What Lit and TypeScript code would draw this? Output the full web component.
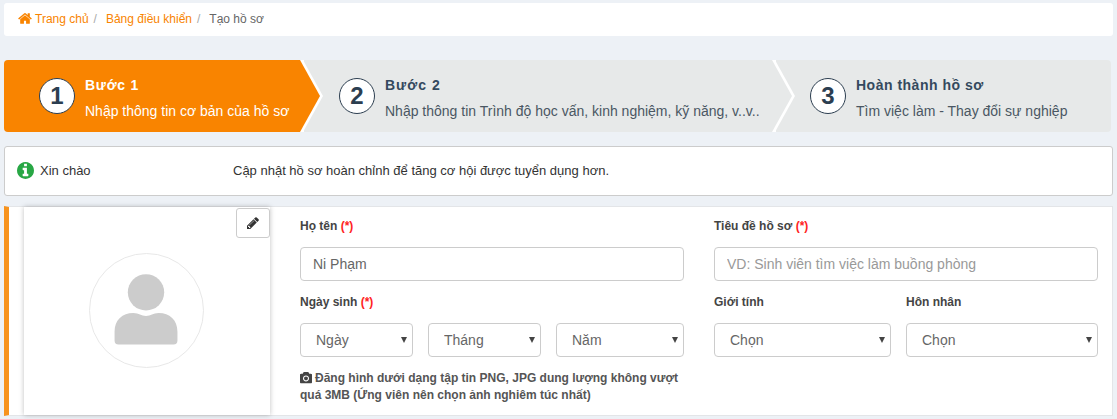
import { LitElement, html, css, svg } from "lit";
import { customElement } from "lit/decorators.js";

const HOME = "M1408 992v480q0 26-19 45t-45 19h-384v-384h-256v384h-384q-26 0-45-19t-19-45v-480q0-1 .5-3t.5-3l575-474 575 474q1 2 1 6zm223-69l-62 74q-8 9-21 11h-3q-13 0-21-7l-692-577-692 577q-12 8-24 7-13-2-21-11l-62-74q-8-10-7-23.500t11-21.500l719-599q32-26 76-26t76 26l244 204v-195q0-14 9-23t23-9h192q14 0 23 9t9 23v408l219 182q10 8 11 21.500t-7 23.500z";
const PENCIL = "M491 1536l91-91-235-235-91 91v107h128v128h107zm523-928q0-22-22-22-10 0-17 7l-542 542q-7 7-7 17 0 22 22 22 10 0 17-7l542-542q7-7 7-17zm-54-192l416 416-832 832h-416v-416zm683 96q0 53-37 90l-166 166-416-416 166-165q36-38 90-38 53 0 91 38l235 234q37 39 37 91z";
const CAMERA = "M896 672q119 0 203.500 84.500t84.500 203.500-84.500 203.500-203.500 84.500-203.500-84.500-84.500-203.500 84.500-203.500 203.500-84.500zm704-416q106 0 181 75t75 181v896q0 106-75 181t-181 75h-1408q-106 0-181-75t-75-181v-896q0-106 75-181t181-75h224l51-136q19-49 69.500-84.500t103.500-35.500h512q53 0 103.500 35.500t69.500 84.500l51 136h224zm-704 1152q185 0 316.500-131.500t131.500-316.500-131.500-316.500-316.500-131.500-316.500 131.500-131.500 316.500 131.500 316.500 316.500 131.500z";
const INFO = "M1152 1376v-160q0-14-9-23t-23-9h-96v-512q0-14-9-23t-23-9h-320q-14 0-23 9t-9 23v160q0 14 9 23t23 9h96v320h-96q-14 0-23 9t-9 23v160q0 14 9 23t23 9h448q14 0 23-9t9-23zm-128-896v-160q0-14-9-23t-23-9h-192q-14 0-23 9t-9 23v160q0 14 9 23t23 9h192q14 0 23-9t9-23zm640 416q0 209-103 385.500t-279.500 279.500-385.500 103-385.500-103-279.500-279.500-103-385.500 103-385.500 279.500-279.500 385.500-103 385.500 103 279.500 279.500 103 385.500z";

const icon = (d: string, cls: string, vb = "0 0 1792 1792") =>
  html`<svg class=${cls} viewBox=${vb} aria-hidden="true">${svg`<path d=${d} fill="currentColor"></path>`}</svg>`;

@customElement("app-root")
export class AppRoot extends LitElement {
  static styles = css`
    :host {
      display: block;
      width: 1117px;
      height: 419px;
      overflow: hidden;
      background: #edf1f6;
      font-family: "Liberation Sans", Arial, sans-serif;
      font-size: 12px;
      color: #333;
      box-sizing: border-box;
      padding: 3px 4px 0;
    }
    * { box-sizing: border-box; }
    .crumbs {
      height: 33px;
      background: #fff;
      border-radius: 3px;
      display: flex;
      align-items: center;
      padding: 0 14px 2px 14px;
      font-size: 12px;
      color: #666;
    }
    .crumbs a { color: #f98400; text-decoration: none; display: flex; align-items: center; gap: 3px; }
    .crumbs .sep { color: #aaa; padding: 0 9px 0 5px; }
    .home { width: 14px; height: 15px; }

    .steps {
      margin: 24px 2px 0 0;
      height: 72px;
      display: flex;
      background: #e7e9e9;
      border-radius: 4px;
    }
    .step {
      position: relative;
      display: flex;
      align-items: center;
      gap: 10px;
      color: #4a5763;
    }
    .step:nth-child(1) { width: 296px; padding-left: 35px; background: #f98400; color: #fff; border-radius: 4px 0 0 4px; }
    .step:nth-child(2) { width: 472px; padding-left: 39px; }
    .step:nth-child(3) { flex: 1; padding-left: 38px; }
    .step .outer, .step .inner {
      position: absolute;
      top: 0;
      height: 72px;
      clip-path: polygon(0 0, 100% 50%, 0 100%);
    }
    .step .outer { left: calc(100% + 4px); width: 20px; background: #fff; z-index: 1; margin-left: -1px; }
    .step .inner { left: 100%; width: 20px; z-index: 2; }
    .step .outer.back { left: 100%; width: 4px; clip-path: none; margin-left: 0; }
    .step:nth-child(1) .inner { background: #f98400; }
    .step:nth-child(2) .inner { background: #e7e9e9; }
    .num {
      width: 36px;
      height: 36px;
      flex: none;
      border-radius: 50%;
      background: #fff;
      border: 1px solid #2c3e50;
      color: #2c3e50;
      font-size: 24px;
      font-weight: 700;
      display: flex;
      align-items: center;
      justify-content: center;
    }
    .st-text { padding-top: 4px; }
    .st-title { font-size: 14px; font-weight: 700; line-height: 20px; letter-spacing: .5px; color: #34495e; }
    .step:nth-child(1) .st-title { color: #fff; letter-spacing: .7px; }
    .step:nth-child(2) .st-title { letter-spacing: 1px; }
    .st-sub { font-size: 14px; line-height: 20px; margin-top: 6px; white-space: nowrap; }

    .alert {
      margin-top: 14px;
      height: 50px;
      background: #fff;
      border: 1px solid #ccc;
      border-radius: 3px;
      display: flex;
      align-items: center;
      padding: 0 12px 1px 12px;
      color: #333;
      font-size: 13px;
    }
    .info { width: 17px; height: 17px; color: #28a745; flex: none; }
    .hello { margin-left: 6px; width: 193px; }

    .panel {
      margin-top: 10px;
      height: 210px;
      background: #fff;
      border: 1px solid #e3e5e8;
      border-left: 5px solid #f7931e;
      display: flex;
      padding-left: 15px;
    }
    .photo {
      width: 246px;
      flex: none;
      height: 208px;
      position: relative;
      box-shadow: 0 0 5px rgba(0, 0, 0, .25);
      display: flex;
      align-items: center;
      justify-content: center;
      background: #fff;
    }
    .edit {
      position: absolute;
      top: 1px;
      right: 0;
      width: 34px;
      height: 30px;
      background: #fff;
      border: 1px solid #ccc;
      border-radius: 3px;
      color: #333;
      display: flex;
      align-items: center;
      justify-content: center;
      padding: 0;
    }
    .pencil { width: 14px; height: 14px; }
    .avatar {
      width: 115px;
      height: 115px;
      border-radius: 50%;
      border: 1px solid #e8e8e8;
      margin: -2px 0 0 -2px;
    }
    .avatar svg { display: block; width: 100%; height: 100%; }
    .form {
      margin-left: 30px;
      width: 798px;
      display: grid;
      grid-template-columns: 384px 384px;
      column-gap: 30px;
      align-content: start;
      padding-top: 11px;
    }
    .field { display: flex; flex-direction: column; min-width: 0; }
    label { font-weight: 700; font-size: 12px; line-height: 17px; height: 17px; color: #444; margin-bottom: 12px; white-space: nowrap; }
    label b { color: #f22; font-weight: 700; }
    input, select {
      font-family: inherit;
      font-size: 14px;
      height: 34px;
      width: 100%;
      border: 1px solid #ccc;
      border-radius: 4px;
      background: #fff;
      color: #666;
      outline: none;
    }
    input { padding: 0 12px; }
    input::placeholder { color: #999; opacity: 1; }
    select { appearance: none; -webkit-appearance: none; padding: 0 20px 0 15px; }
    .sel { position: relative; display: block; flex: none; }
    .sel::after {
      content: "";
      position: absolute;
      top: 14px;
      right: 6px;
      border-left: 3.5px solid transparent;
      border-right: 3.5px solid transparent;
      border-top: 6px solid #444;
      pointer-events: none;
    }
    .row2 { margin-top: 13px; }
    .dates { display: flex; gap: 15px; }
    .dates .sel { width: 113px; }
    .dates .sel:last-child { width: 128px; }
    .pair { display: grid; grid-template-columns: 177px 192px; column-gap: 15px; }
    .note {
      margin-top: 13px;
      font-weight: 700;
      font-size: 12px;
      line-height: 17px;
      color: #555;
    }
    .cam { width: 12px; height: 12px; vertical-align: -2px; margin-right: 3px; color: #444; }
  `;

  private sel(label: string) {
    return html`<span class="sel"><select><option>${label}</option></select></span>`;
  }

  render() {
    return html`
      <nav class="crumbs">
        <a href="#">${icon(HOME, "home", "0 0 1664 1792")}Trang chủ</a><span class="sep">/</span>
        <a href="#">Bảng điều khiển</a><span class="sep">/</span>
        <span>Tạo hồ sơ</span>
      </nav>

      <section class="steps">
        <div class="step">
          <span class="num">1</span>
          <div class="st-text"><div class="st-title">Bước 1</div><div class="st-sub">Nhập thông tin cơ bản của hồ sơ</div></div>
          <i class="outer back"></i><i class="outer"></i><i class="inner"></i>
        </div>
        <div class="step">
          <span class="num">2</span>
          <div class="st-text"><div class="st-title">Bước 2</div><div class="st-sub">Nhập thông tin Trình độ học vấn, kinh nghiệm, kỹ năng, v..v..</div></div>
          <i class="outer back"></i><i class="outer"></i><i class="inner"></i>
        </div>
        <div class="step">
          <span class="num">3</span>
          <div class="st-text"><div class="st-title">Hoàn thành hồ sơ</div><div class="st-sub">Tìm việc làm - Thay đổi sự nghiệp</div></div>
        </div>
      </section>

      <section class="alert">
        ${icon(INFO, "info", "128 128 1536 1536")}
        <span class="hello">Xin chào</span>
        <span>Cập nhật hồ sơ hoàn chỉnh để tăng cơ hội được tuyển dụng hơn.</span>
      </section>

      <section class="panel">
        <div class="photo">
          <button class="edit">${icon(PENCIL, "pencil")}</button>
          <div class="avatar">
            <svg viewBox="0 0 115 115" aria-hidden="true">
              <circle cx="57" cy="39" r="18.500" fill="#ccc"></circle>
              <path d="M25 92 V79 C25 67 33 60 44 60 C50 60 52 63 57 63 C62 63 64 60 70 60 C81 60 89 67 89 79 V88 Q89 92 85 92 H29 Q25 92 25 88 Z" fill="#ccc"></path>
            </svg>
          </div>
        </div>
        <div class="form">
          <div class="field">
            <label>Họ tên <b>(*)</b></label>
            <input value="Ni Phạm" />
          </div>
          <div class="field">
            <label>Tiêu đề hồ sơ <b>(*)</b></label>
            <input placeholder="VD: Sinh viên tìm việc làm buồng phòng" />
          </div>
          <div class="field row2">
            <label>Ngày sinh <b>(*)</b></label>
            <div class="dates">${this.sel("Ngày")}${this.sel("Tháng")}${this.sel("Năm")}</div>
            <div class="note">${icon(CAMERA, "cam")}Đăng hình dưới dạng tập tin PNG, JPG dung lượng không vượt quá 3MB (Ứng viên nên chọn ảnh nghiêm túc nhất)</div>
          </div>
          <div class="pair row2">
            <div class="field"><label>Giới tính</label>${this.sel("Chọn")}</div>
            <div class="field"><label>Hôn nhân</label>${this.sel("Chọn")}</div>
          </div>
        </div>
      </section>
    `;
  }
}
